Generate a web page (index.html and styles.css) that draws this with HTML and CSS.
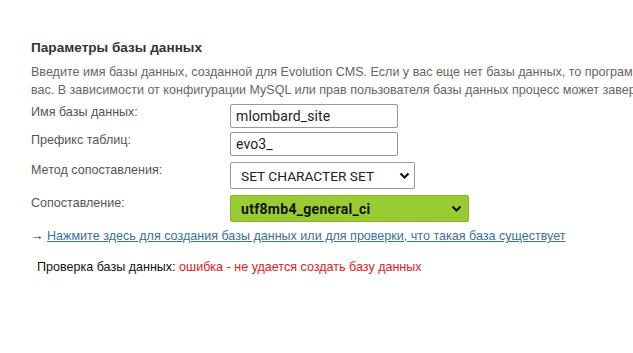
FILE: index.html
```html
<!DOCTYPE html>
<html lang="ru">
<head>
  <meta charset="UTF-8">
  <meta name="viewport" content="width=device-width, initial-scale=1.0">
  <title>Evolution CMS – установка</title>
  <link rel="stylesheet" href="styles.css">
</head>
<body>

  <div class="install">
    <h2>Параметры базы данных</h2>
    <p class="intro">
      Введите имя базы данных, созданной для Evolution CMS. Если у вас еще нет базы данных, то программа установки попытается создать ее для<br>
      вас. В зависимости от конфигурации MySQL или прав пользователя базы данных процесс может завершиться неудачей.
    </p>

    <div class="fields">
      <label class="row">
        <span class="label">Имя базы данных:</span>
        <input type="text" class="txt" value="mlombard_site">
      </label>
      <label class="row">
        <span class="label">Префикс таблиц:</span>
        <input type="text" class="txt" value="evo3_">
      </label>
      <label class="row">
        <span class="label">Метод сопоставления:</span>
        <span class="sel method">
          SET CHARACTER SET
          <svg width="11" height="8" viewBox="0 0 11 8"><path d="M1.5 1.5l4 4 4-4" fill="none" stroke="#111" stroke-width="2.2"/></svg>
        </span>
      </label>
      <label class="row">
        <span class="label">Сопоставление:</span>
        <span class="sel collation">
          utf8mb4_general_ci
          <svg width="11" height="8" viewBox="0 0 11 8"><path d="M1.5 1.5l4 4 4-4" fill="none" stroke="#111" stroke-width="2.2"/></svg>
        </span>
      </label>
    </div>

    <p class="create">&rarr; <a href="#">Нажмите здесь для создания базы данных или для проверки, что такая база существует</a></p>

    <p class="status">Проверка базы данных: <span class="err">ошибка - не удается создать базу данных</span></p>
  </div>

</body>
</html>
```

FILE: styles.css
```css
html, body { margin: 0; padding: 0; background: #fff; overflow: hidden; }
body {
  font-family: "Liberation Sans", Arial, sans-serif;
  font-size: 12.55px;
  color: #333;
}
.install {
  width: 1000px;
  padding: 39px 0 0 31px;
}
.install h2 {
  margin: 0;
  font-size: 13.6px;
  font-weight: bold;
  color: #333;
  line-height: 18px;
}
.intro {
  margin: 6px 0 0;
  color: #666;
  line-height: 18px;
  white-space: nowrap;
}
.fields {
  margin-top: 5px;
  display: flex;
  flex-direction: column;
  gap: 6px;
}
.row { display: flex; align-items: flex-start; }
.row:nth-child(2) { margin-top: -2px; }
.label {
  width: 199px;
  color: #555;
  line-height: 15px;
  padding-top: 1px;
}
.txt {
  box-sizing: border-box;
  width: 168px;
  height: 24px;
  margin: 0;
  padding: 0 5px;
  border: 1px solid #999;
  border-radius: 2px;
  font-family: Roboto, "Liberation Sans", sans-serif;
  font-size: 14px;
  color: #222;
  letter-spacing: 0.1px;
}
.sel {
  box-sizing: border-box;
  height: 27px;
  display: flex;
  align-items: center;
  justify-content: space-between;
  padding: 0 4px 0 10px;
  border: 1px solid #999;
  border-radius: 2px;
  font-family: Roboto, "Liberation Sans", sans-serif;
  font-size: 13.7px;
  color: #222;
}
.method { width: 185px; background: #fff; }
.collation {
  width: 239px;
  background: #99cc33;
  border-color: #86b02a;
  font-weight: bold;
  font-size: 14px;
  color: #111;
  letter-spacing: 0.3px;
  padding-right: 6px;
}
.create {
  margin: 5px 0 0;
  color: #222;
  line-height: 18px;
}
.create a { color: #3d6f96; }
.status {
  margin: 15px 0 0 6px;
  color: #111;
}
.err { color: #e02020; }
```
